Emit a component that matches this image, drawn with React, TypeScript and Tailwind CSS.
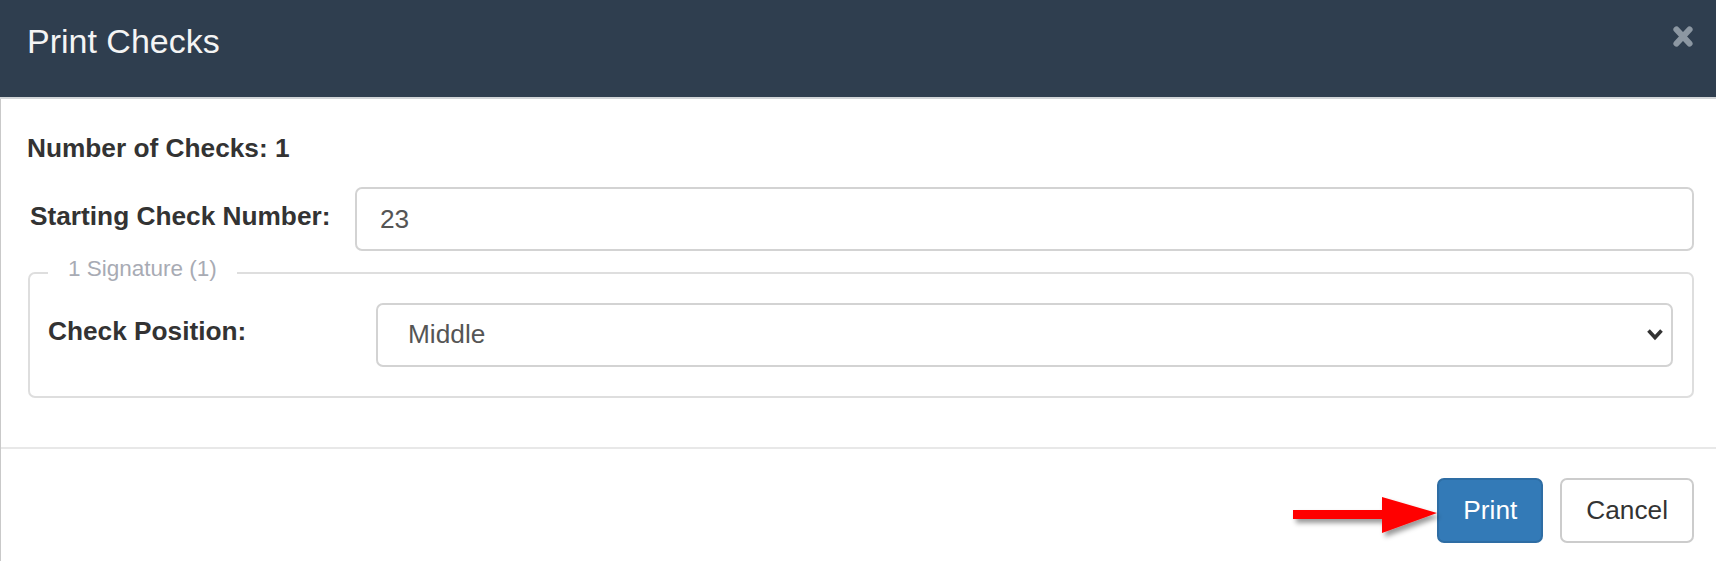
import React from "react";

const font = "font-['Liberation_Sans',Arial,Helvetica,sans-serif]";

const CloseIcon: React.FC = () => (
    <svg width="22" height="23" viewBox="0 0 22 23" className="mt-[25px] shrink-0">
        <path d="M4.5 4.5 L17.5 18.5 M17.5 4.5 L4.5 18.5" stroke="#8c97a2" strokeWidth="6.2" strokeLinecap="round" fill="none" />
    </svg>
);

const Chevron: React.FC = () => (
    <svg width="18" height="13" viewBox="0 0 18 13" className="absolute right-[9px] top-[25px] pointer-events-none">
        <path d="M2.5 2.5 L9 9.5 L15.5 2.5" stroke="#333" strokeWidth="3.6" fill="none" strokeLinejoin="miter" />
    </svg>
);

const RedArrow: React.FC = () => (
    <svg width="160" height="56" viewBox="0 0 160 56" className="absolute left-[1288px] top-[490px] pointer-events-none">
        <defs>
            <filter id="arrowShadow" x="-10%" y="-30%" width="130%" height="180%">
                <feDropShadow dx="3" dy="4" stdDeviation="2.5" floodColor="#000" floodOpacity="0.4" />
            </filter>
        </defs>
        <g filter="url(#arrowShadow)">
            <rect x="5" y="20" width="91" height="9" fill="#ff0000" />
            <polygon points="94,7 94,43 149,23" fill="#ff0000" />
        </g>
    </svg>
);

export default function App() {
    return (
        <div className={`relative w-[1716px] h-[561px] bg-white overflow-hidden ${font}`}>
            {/* header */}
            <div className="h-[99px] bg-[#2f3e4f] border-b-2 border-[#d2d5d8] flex justify-between pl-[27px] pr-[22px]">
                <h4 className="pt-[17px] text-[34px] leading-[48px] text-[#f4f4f4]">Print Checks</h4>
                <CloseIcon />
            </div>

            <div className="border-l border-[#c9c9c9] h-[462px]">
                {/* body */}
                <div className="pl-[26px] pr-[22px] pt-[30px] pb-[49px] text-[26.25px] text-[#333]">
                    <div className="font-bold leading-[38px]">Number of Checks: 1</div>

                    <div className="flex items-start mt-[20px]">
                        <label className="w-[328px] shrink-0 pl-[3px] pt-[10px] font-bold leading-[38px]">Starting Check Number:</label>
                        <input
                            defaultValue="23"
                            className="flex-1 h-[64px] border-2 border-[#d3d3d3] rounded-[7px] pl-[23px] text-[26.25px] text-[#555] outline-none"
                        />
                    </div>

                    <fieldset className="ml-[1px] mt-[6px] border-2 border-[#dedede] rounded-[7px] pl-[18px] pr-[19px] pt-[15px] pb-[29px]">
                        <legend className="px-[20px] pb-[8px] text-[22.5px] leading-[23px] text-[#a8abb4]">1 Signature (1)</legend>
                        <div className="flex items-start">
                            <label className="w-[328px] shrink-0 pt-[9px] font-bold leading-[38px]">Check Position:</label>
                            <div className="relative flex-1">
                                <select
                                    defaultValue="Middle"
                                    className="w-full h-[64px] appearance-none bg-white border-2 border-[#d3d3d3] rounded-[7px] pl-[30px] text-[26.25px] text-[#555] outline-none"
                                >
                                    <option>Top</option>
                                    <option>Middle</option>
                                    <option>Bottom</option>
                                </select>
                                <Chevron />
                            </div>
                        </div>
                    </fieldset>
                </div>

                {/* footer */}
                <div className="border-t-2 border-[#e8e8e8] flex justify-end gap-[17px] pr-[22px] pt-[29px]">
                    <button className="h-[65px] px-[24px] rounded-[7px] bg-[#337ab7] border-2 border-[#2e6da4] text-white text-[26.25px]">
                        Print
                    </button>
                    <button className="h-[65px] px-[24px] rounded-[7px] bg-white border-2 border-[#cccccc] text-[#333] text-[26.25px]">
                        Cancel
                    </button>
                </div>
            </div>

            <RedArrow />
        </div>
    );
}
